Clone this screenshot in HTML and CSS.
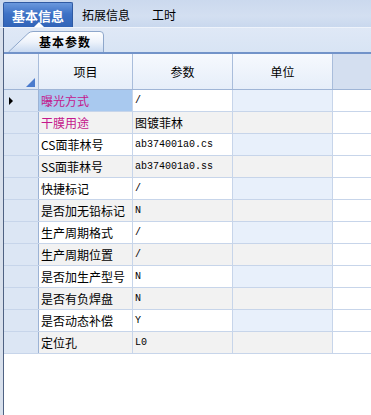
FILE: index.html
```html
<!DOCTYPE html>
<html lang="zh">
<head>
<meta charset="UTF-8">
<title>基本信息</title>
<link rel="stylesheet" href="styles.css">
</head>
<body>
<div class="win">
	<div class="topbar">
		<div class="tab active">基本信息</div>
		<div class="tab">拓展信息</div>
		<div class="tab">工时</div>
	</div>
	<div class="body">
		<div class="subbar">
			<div class="subtab">
				<svg class="subtab-bg" width="97" height="21" viewBox="0 0 97 21">
					<defs>
						<linearGradient id="stg" x1="0" y1="0" x2="0" y2="1">
							<stop offset="0" stop-color="#ffffff"/>
							<stop offset="0.5" stop-color="#eef3fb"/>
							<stop offset="1" stop-color="#c9daf1"/>
						</linearGradient>
					</defs>
					<path d="M0.5,21 L20,2.5 Q22,0.5 25,0.5 L92,0.5 Q95.5,0.5 95.5,4 L95.5,21" fill="url(#stg)" stroke="#8ea7cb"/>
				</svg>
				<span>基本参数</span>
			</div>
		</div>
		<div class="grid">
			<div class="row head">
				<div class="c rh"><i class="corner"></i></div>
				<div class="c c1">项目</div>
				<div class="c c2">参数</div>
				<div class="c c3">单位</div>
				<div class="c rest"></div>
			</div>
			<div class="row odd">
				<div class="c rh"><i class="cur"></i></div>
				<div class="c c1 sel pink">曝光方式</div>
				<div class="c c2 mono">/</div>
				<div class="c c3"></div>
				<div class="c rest"></div>
			</div>
			<div class="row even">
				<div class="c rh"></div>
				<div class="c c1 pink">干膜用途</div>
				<div class="c c2">图镀菲林</div>
				<div class="c c3"></div>
				<div class="c rest"></div>
			</div>
			<div class="row odd">
				<div class="c rh"></div>
				<div class="c c1">CS面菲林号</div>
				<div class="c c2 mono">ab374001a0.cs</div>
				<div class="c c3"></div>
				<div class="c rest"></div>
			</div>
			<div class="row even">
				<div class="c rh"></div>
				<div class="c c1">SS面菲林号</div>
				<div class="c c2 mono">ab374001a0.ss</div>
				<div class="c c3"></div>
				<div class="c rest"></div>
			</div>
			<div class="row odd">
				<div class="c rh"></div>
				<div class="c c1">快捷标记</div>
				<div class="c c2 mono">/</div>
				<div class="c c3"></div>
				<div class="c rest"></div>
			</div>
			<div class="row even">
				<div class="c rh"></div>
				<div class="c c1">是否加无铅标记</div>
				<div class="c c2 mono">N</div>
				<div class="c c3"></div>
				<div class="c rest"></div>
			</div>
			<div class="row odd">
				<div class="c rh"></div>
				<div class="c c1">生产周期格式</div>
				<div class="c c2 mono">/</div>
				<div class="c c3"></div>
				<div class="c rest"></div>
			</div>
			<div class="row even">
				<div class="c rh"></div>
				<div class="c c1">生产周期位置</div>
				<div class="c c2 mono">/</div>
				<div class="c c3"></div>
				<div class="c rest"></div>
			</div>
			<div class="row odd">
				<div class="c rh"></div>
				<div class="c c1">是否加生产型号</div>
				<div class="c c2 mono">N</div>
				<div class="c c3"></div>
				<div class="c rest"></div>
			</div>
			<div class="row even">
				<div class="c rh"></div>
				<div class="c c1">是否有负焊盘</div>
				<div class="c c2 mono">N</div>
				<div class="c c3"></div>
				<div class="c rest"></div>
			</div>
			<div class="row odd">
				<div class="c rh"></div>
				<div class="c c1">是否动态补偿</div>
				<div class="c c2 mono">Y</div>
				<div class="c c3"></div>
				<div class="c rest"></div>
			</div>
			<div class="row even">
				<div class="c rh"></div>
				<div class="c c1">定位孔</div>
				<div class="c c2 mono">L0</div>
				<div class="c c3"></div>
				<div class="c rest"></div>
			</div>
		</div>
	</div>
</div>
</body>
</html>
```

FILE: styles.css
```css
* {margin:0; padding:0; box-sizing:border-box;}
html, body {width:371px; height:415px; overflow:hidden; background:#fff;}
body {font-family:"Noto Sans CJK SC", "Liberation Sans", sans-serif; font-size:12px; color:#000;}

.win {width:371px; height:415px; display:flex; flex-direction:column; background:#d8e0ec;}

/* top tabs */
.topbar {height:28px; flex:none; display:flex; align-items:flex-end; padding-left:3px; background:linear-gradient(#cbd9ee, #d3dff1 60%, #c9d8ee); border-bottom:1px solid #eef3fb;}
.tab {height:25px; line-height:25px; padding:0 13px 0 9px; white-space:nowrap;}
.tab.active {position:relative; padding:0 8px; font-size:13px; font-weight:bold; color:#fff; background:linear-gradient(#6a98dd, #3e72c6 45%, #3164b8); border:1px solid #2f5aa3; border-bottom:0; border-radius:2px 2px 0 0;}
.tab.active::after {content:""; position:absolute; left:30px; bottom:0; border-left:5px solid transparent; border-right:5px solid transparent; border-bottom:5px solid #fff;}

.body {flex:1; margin-left:3px; border-left:1px solid #4f6283; background:#fff; display:flex; flex-direction:column;}

/* sub tab */
.subbar {height:26px; flex:none; display:flex; align-items:flex-end; padding-left:4px; background:linear-gradient(#dfe8f6, #d8e4f4); border-bottom:2px solid #7293c9;}
.subtab {position:relative; width:97px; height:21px; display:flex; align-items:center; justify-content:flex-end; padding-right:14px;}
.subtab-bg {position:absolute; left:0; top:0;}
.subtab span {position:relative; font-weight:bold; font-size:12px; letter-spacing:1px;}

/* grid */
.grid {flex:none;}
.row {display:flex; height:22px; border-bottom:1px solid #c7d5ea;}
.c {height:100%; display:flex; align-items:center; padding-left:2px; border-right:1px solid #c7d5ea; white-space:nowrap; overflow:hidden;}
.rh {width:35px; position:relative; background:#dce6f4; border-right:1px solid #9cb3d5;}
.row .rh {border-bottom:0;}
.c1 {width:94px;}
.c2 {width:100px;}
.c3 {width:100px;}
.rest {flex:1; border-right:0;}

.row.head {height:36px; border-bottom:1px solid #9fb5d6;}
.head .c {justify-content:center; padding:0; background:linear-gradient(#f6f9fe, #e6eef9); border-right-color:#a9bddb;}
.head .rh {background:linear-gradient(#eef3fb, #dde7f5);}
.head .rest {background:#d4dff0;}
.corner {position:absolute; right:3px; bottom:2px; border-left:9px solid transparent; border-bottom:9px solid #4a7bcd;}
.cur {position:absolute; left:5px; top:7px; border-top:4px solid transparent; border-bottom:4px solid transparent; border-left:4px solid #000;}

.odd .c3 {background:#e8f0fb;}
.even .c1, .even .c2, .even .c3 {background:#f2f2f2;}
.sel {background:#a9c9ef;}
.pink {color:#c4178c;}
.mono {font-family:"Liberation Mono", monospace; font-size:10px;}
```
